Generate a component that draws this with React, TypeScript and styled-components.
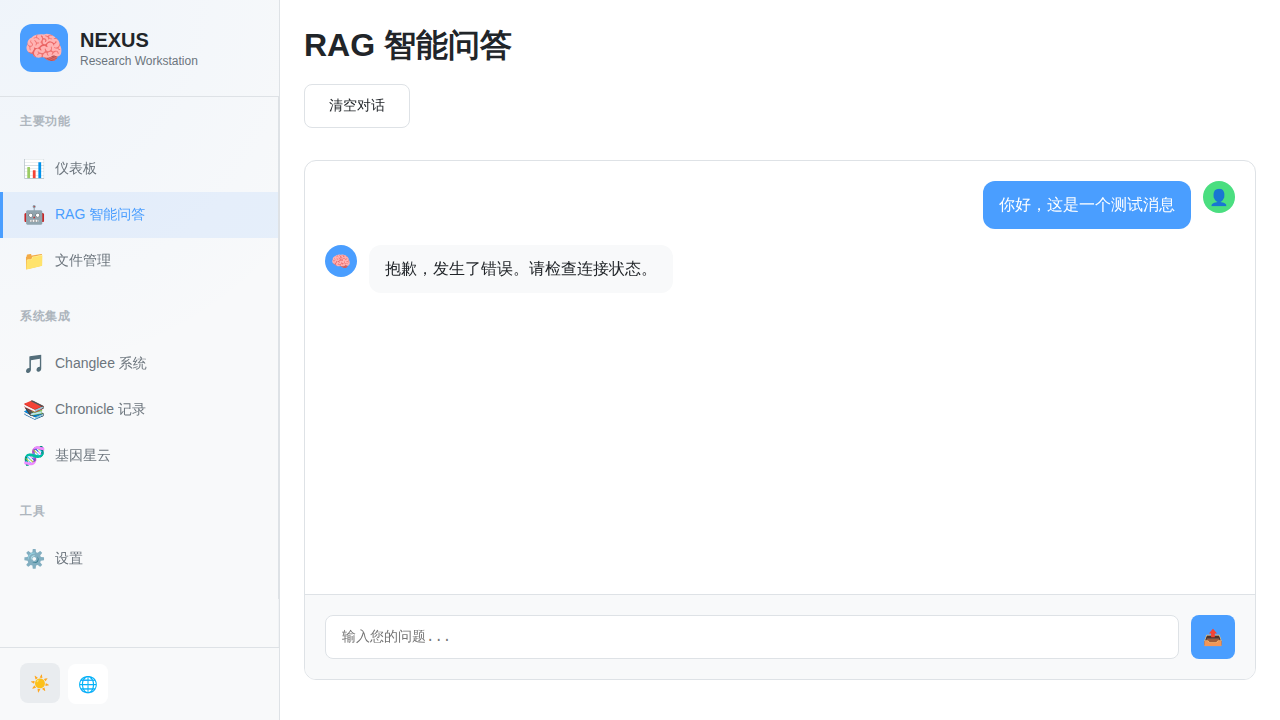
import React from "react";
import styled, { createGlobalStyle } from "styled-components";

const Global = createGlobalStyle`
  * { box-sizing: border-box; margin: 0; padding: 0; }
  body { font-family: "Liberation Sans", "WenQuanYi Zen Hei", "Noto Sans CJK SC", "Noto Color Emoji", sans-serif; font-size: 16px; line-height: 1.5; color: #212529; background: #fff; overflow: hidden; }
  button, textarea { font-family: inherit; }
`;

const Layout = styled.div`
  display: flex;
  height: 100vh;
`;

const Sidebar = styled.aside`
  width: 280px;
  flex: none;
  display: flex;
  flex-direction: column;
  border-right: 1px solid #dee2e6;
  background: radial-gradient(circle at 0 0, rgba(74, 158, 255, 0.05), transparent 50%), #f8f9fa;
`;

const Brand = styled.header`
  display: flex;
  align-items: center;
  gap: 12px;
  height: 97px;
  padding: 0 20px;
  border-bottom: 1px solid #dee2e6;
`;

const Logo = styled.div`
  width: 48px;
  height: 48px;
  border-radius: 12px;
  background: #4a9eff;
  display: flex;
  align-items: center;
  justify-content: center;
  font-size: 32px;
`;

const BrandName = styled.h1`
  padding-top: 1px;
  font-size: 20px;
  line-height: 24px;
  font-weight: 700;
`;

const BrandSub = styled.p`
  font-size: 12px;
  line-height: 18px;
  color: #6c757d;
`;

const NavArea = styled.div`
  flex: 1;
  display: flex;
`;

const Nav = styled.nav`
  flex: 1;
  padding-top: 15px;
`;

const ScrollTrack = styled.div`
  width: 1px;
  background: #f1f3f5;
`;

const ScrollThumb = styled.div`
  height: 502px;
  background: #dee2e6;
`;

const Section = styled.section`
  margin-bottom: 23px;
`;

const SectionTitle = styled.h2`
  height: 34px;
  padding: 0 20px;
  font-family: "Liberation Sans", sans-serif;
  font-size: 12px;
  line-height: 18px;
  font-weight: 600;
  letter-spacing: 0.5px;
  color: #adb5bd;
`;

const NavItem = styled.a<{ $active?: boolean }>`
  display: flex;
  align-items: center;
  gap: 8px;
  height: 46px;
  padding-left: 20px;
  border-left: 3px solid ${(p) => (p.$active ? "#4a9eff" : "transparent")};
  background: ${(p) => (p.$active ? "rgba(74, 158, 255, 0.1)" : "transparent")};
  color: ${(p) => (p.$active ? "#4a9eff" : "#6c757d")};
  font-size: 14px;
`;

const NavIcon = styled.span`
  width: 24px;
  text-align: center;
  font-size: 18px;
  line-height: 24px;
`;

const NavLabel = styled.span`
  padding-bottom: 2px;
`;

const SideFooter = styled.footer`
  display: flex;
  gap: 8px;
  height: 73px;
  padding: 15px 20px;
  border-top: 1px solid #dee2e6;
`;

const ToolButton = styled.button<{ $pressed?: boolean }>`
  width: 40px;
  height: 40px;
  margin-top: ${(p) => (p.$pressed ? 0 : 1)}px;
  border: 0;
  border-radius: 8px;
  background: ${(p) => (p.$pressed ? "#e9ecef" : "#fff")};
  font-size: 16px;
`;

const Main = styled.main`
  flex: 1;
  display: flex;
  flex-direction: column;
  padding: 24px 24px 40px;
`;

const Title = styled.h2`
  font-family: "Liberation Sans", sans-serif;
  font-size: 32px;
  line-height: 42px;
  font-weight: 700;
`;

const ClearButton = styled.button`
  align-self: flex-start;
  width: 106px;
  height: 44px;
  margin: 18px 0 32px;
  border: 1px solid #dee2e6;
  border-radius: 8px;
  background: #fff;
  color: #212529;
  font-size: 14px;
`;

const Chat = styled.section`
  flex: 1;
  display: flex;
  flex-direction: column;
  border: 1px solid #dee2e6;
  border-radius: 12px;
  overflow: hidden;
`;

const Messages = styled.div`
  flex: 1;
  display: flex;
  flex-direction: column;
  gap: 16px;
  padding: 20px;
`;

const Message = styled.div<{ $user?: boolean }>`
  display: flex;
  flex-direction: ${(p) => (p.$user ? "row-reverse" : "row")};
  gap: 12px;
`;

const Avatar = styled.div<{ $user?: boolean }>`
  width: 32px;
  height: 32px;
  padding-top: 2px;
  border-radius: 50%;
  display: flex;
  align-items: center;
  justify-content: center;
  font-size: 16px;
  background: ${(p) => (p.$user ? "#4ade80" : "#4a9eff")};
`;

const Bubble = styled.div<{ $user?: boolean }>`
  height: 48px;
  padding: 12px 16px;
  border-radius: 12px;
  line-height: 24px;
  background: ${(p) => (p.$user ? "#4a9eff" : "#f8f9fa")};
  color: ${(p) => (p.$user ? "#fff" : "#212529")};
`;

const Composer = styled.div`
  display: flex;
  gap: 12px;
  height: 85px;
  padding: 20px;
  border-top: 1px solid #dee2e6;
  background: #f8f9fa;
`;

const Input = styled.textarea`
  flex: 1;
  height: 44px;
  padding: 12px 16px;
  border: 1px solid #dee2e6;
  border-radius: 8px;
  background: #fff;
  font-family: "Liberation Mono", "WenQuanYi Zen Hei", "Noto Sans CJK SC", monospace;
  font-size: 14px;
  resize: none;
  overflow: hidden;
  &::placeholder { color: #757575; }
`;

const Send = styled.button`
  width: 44px;
  height: 44px;
  border: 0;
  border-radius: 8px;
  background: #4a9eff;
  font-size: 16px;
`;

const sections = [
  { title: "主要功能", items: [["📊", "仪表板"], ["🤖", "RAG 智能问答"], ["📁", "文件管理"]] },
  { title: "系统集成", items: [["🎵", "Changlee 系统"], ["📚", "Chronicle 记录"], ["🧬", "基因星云"]] },
  { title: "工具", items: [["⚙️", "设置"]] },
];

export default function App() {
  return (
    <Layout>
      <Global />
      <Sidebar>
        <Brand>
          <Logo>🧠</Logo>
          <div>
            <BrandName>NEXUS</BrandName>
            <BrandSub>Research Workstation</BrandSub>
          </div>
        </Brand>
        <NavArea>
          <Nav>
            {sections.map((s) => (
              <Section key={s.title}>
                <SectionTitle>{s.title}</SectionTitle>
                {s.items.map(([icon, label]) => (
                  <NavItem key={label} $active={label === "RAG 智能问答"}>
                    <NavIcon>{icon}</NavIcon>
                    <NavLabel>{label}</NavLabel>
                  </NavItem>
                ))}
              </Section>
            ))}
          </Nav>
          <ScrollTrack>
            <ScrollThumb />
          </ScrollTrack>
        </NavArea>
        <SideFooter>
          <ToolButton $pressed>☀️</ToolButton>
          <ToolButton>🌐</ToolButton>
        </SideFooter>
      </Sidebar>
      <Main>
        <Title>RAG 智能问答</Title>
        <ClearButton>清空对话</ClearButton>
        <Chat>
          <Messages>
            <Message $user>
              <Avatar $user>👤</Avatar>
              <Bubble $user>你好，这是一个测试消息</Bubble>
            </Message>
            <Message>
              <Avatar>🧠</Avatar>
              <Bubble>抱歉，发生了错误。请检查连接状态。</Bubble>
            </Message>
          </Messages>
          <Composer>
            <Input placeholder="输入您的问题..." />
            <Send>📤</Send>
          </Composer>
        </Chat>
      </Main>
    </Layout>
  );
}
